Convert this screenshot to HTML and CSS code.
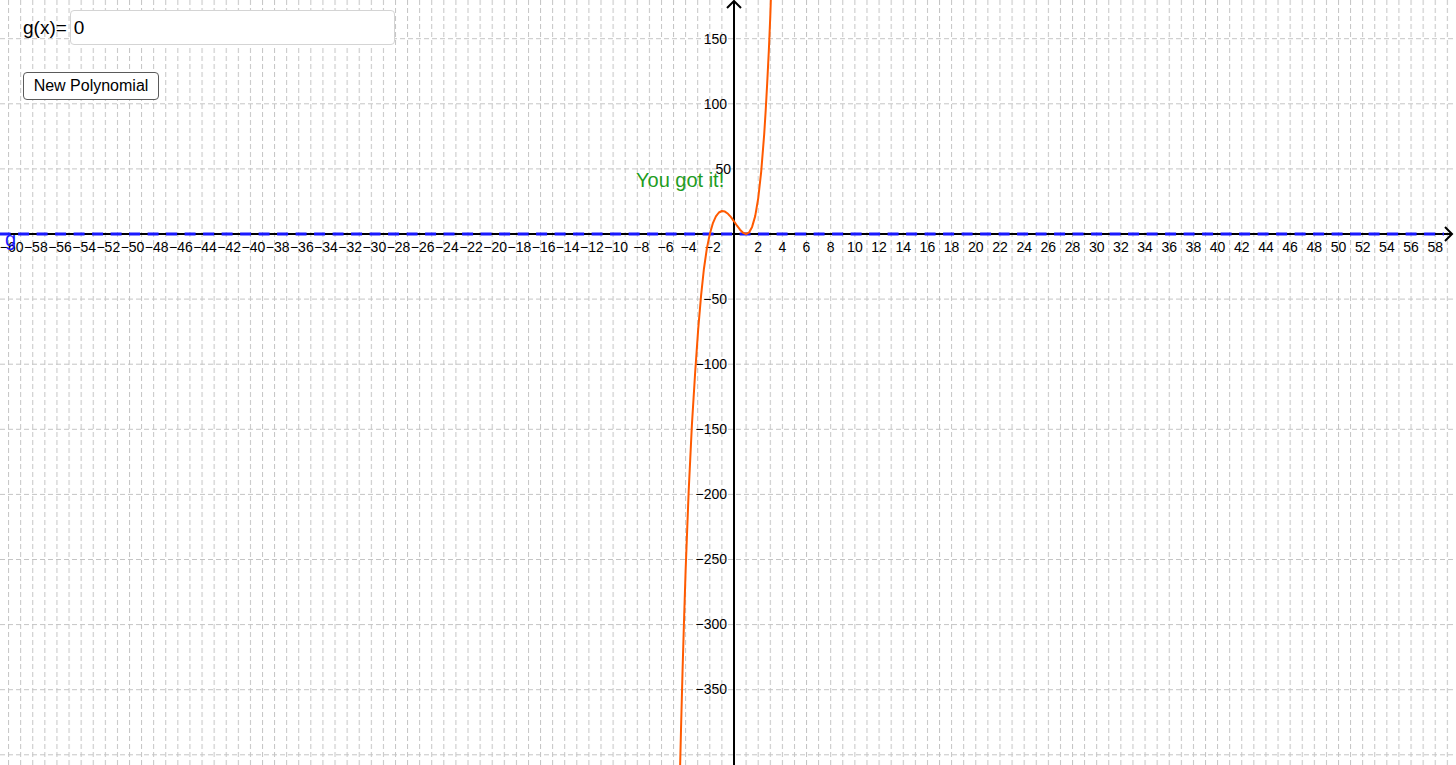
FILE: index.html
```html
<!DOCTYPE html>
<html lang="en">
<head>
<meta charset="utf-8">
<title>New Polynomial</title>
<link rel="stylesheet" href="styles.css">
</head>
<body>
<div class="stage">
  <svg class="graph" width="1456" height="765" viewBox="0 0 1456 765" xmlns="http://www.w3.org/2000/svg">
    <defs>
      <pattern id="gv" x="8.1" y="0" width="12.09" height="8" patternUnits="userSpaceOnUse">
        <rect x="0" y="0" width="1" height="5" class="grid"/>
      </pattern>
      <pattern id="gh" x="0" y="38.2" width="8" height="65.1" patternUnits="userSpaceOnUse">
        <rect x="0" y="0" width="5" height="1" class="grid"/>
      </pattern>
    </defs>
    <rect width="1456" height="765" fill="url(#gv)"/>
    <rect width="1456" height="765" fill="url(#gh)"/>

    <!-- axes -->
    <line class="axis" x1="0" y1="234" x2="1452" y2="234"/>
    <line class="axis" x1="734" y1="1" x2="734" y2="765"/>
    <polyline class="axis" points="1445,227 1452,234 1445,241"/>
    <polyline class="axis" points="727,8 734,1 741,8"/>

    <!-- g(x)=0 -->
    <line class="gline" x1="-0.4" y1="234" x2="1444" y2="234"/>

    <!-- x labels -->
    <g class="xl">
      <text x="11.6" y="252">−60</text>
      <text x="35.8" y="252">−58</text>
      <text x="60.0" y="252">−56</text>
      <text x="84.1" y="252">−54</text>
      <text x="108.3" y="252">−52</text>
      <text x="132.5" y="252">−50</text>
      <text x="156.7" y="252">−48</text>
      <text x="180.9" y="252">−46</text>
      <text x="205.0" y="252">−44</text>
      <text x="229.2" y="252">−42</text>
      <text x="253.4" y="252">−40</text>
      <text x="277.6" y="252">−38</text>
      <text x="301.8" y="252">−36</text>
      <text x="325.9" y="252">−34</text>
      <text x="350.1" y="252">−32</text>
      <text x="374.3" y="252">−30</text>
      <text x="398.5" y="252">−28</text>
      <text x="422.7" y="252">−26</text>
      <text x="446.8" y="252">−24</text>
      <text x="471.0" y="252">−22</text>
      <text x="495.2" y="252">−20</text>
      <text x="519.4" y="252">−18</text>
      <text x="543.6" y="252">−16</text>
      <text x="567.7" y="252">−14</text>
      <text x="591.9" y="252">−12</text>
      <text x="616.1" y="252">−10</text>
      <text x="641.3" y="252">−8</text>
      <text x="665.5" y="252">−6</text>
      <text x="688.6" y="252">−4</text>
      <text x="712.8" y="252">−2</text>
      <text x="758.2" y="252">2</text>
      <text x="782.4" y="252">4</text>
      <text x="806.5" y="252">6</text>
      <text x="830.7" y="252">8</text>
      <text x="854.9" y="252">10</text>
      <text x="879.1" y="252">12</text>
      <text x="903.3" y="252">14</text>
      <text x="927.4" y="252">16</text>
      <text x="951.6" y="252">18</text>
      <text x="975.8" y="252">20</text>
      <text x="1000.0" y="252">22</text>
      <text x="1024.2" y="252">24</text>
      <text x="1048.3" y="252">26</text>
      <text x="1072.5" y="252">28</text>
      <text x="1096.7" y="252">30</text>
      <text x="1120.9" y="252">32</text>
      <text x="1145.1" y="252">34</text>
      <text x="1169.2" y="252">36</text>
      <text x="1193.4" y="252">38</text>
      <text x="1217.6" y="252">40</text>
      <text x="1241.8" y="252">42</text>
      <text x="1266.0" y="252">44</text>
      <text x="1290.1" y="252">46</text>
      <text x="1314.3" y="252">48</text>
      <text x="1338.5" y="252">50</text>
      <text x="1362.7" y="252">52</text>
      <text x="1386.9" y="252">54</text>
      <text x="1411.0" y="252">56</text>
      <text x="1435.2" y="252">58</text>
    </g>

    <!-- y labels -->
    <g class="yl">
      <text x="727" y="44">150</text>
      <text x="727" y="109">100</text>
      <text x="731" y="174">50</text>
      <text x="727" y="304">−50</text>
      <text x="727" y="369">−100</text>
      <text x="727" y="434">−150</text>
      <text x="727" y="499">−200</text>
      <text x="727" y="564">−250</text>
      <text x="727" y="629">−300</text>
      <text x="727" y="694">−350</text>
    </g>

    <!-- f(x) -->
    <polyline class="curve" points="679.6,787 681.1,726 682.6,669 684.1,618.2 685.6,571 687.2,529.3 688.7,490.6 691.9,425 695.2,371.8 698.2,329.1 701.1,295.4 703.9,269 706.8,248.9 709.8,234 712.8,223.4 715.9,216.4 718.9,212.5 721.9,211 724.9,211.6 728,213.8 731,217.2 734,221.3 737,225.7 740,229.7 743.1,232.8 746.1,234 749.1,232.4 752.1,226.9 755.2,216.1 758.2,198.3 761.2,171.7 764.2,134.1 765.7,110.3 767.2,83.1 768.8,51.3 770.3,15.7 773.3,-71"/>

    <text class="glabel" x="5" y="246">g</text>
    <text class="success" x="636" y="187">You got it!</text>
  </svg>

  <div class="input-row">
    <label class="input-label" for="gx">g(x)=</label>
    <div class="input-box" id="gx">0</div>
  </div>
  <button class="btn" type="button">New Polynomial</button>
</div>
</body>
</html>
```

FILE: styles.css
```css
html, body {
  margin: 0;
  padding: 0;
  background: #ffffff;
}

.stage {
  position: relative;
  width: 1456px;
  height: 765px;
  overflow: hidden;
  background: #ffffff;
  font-family: "Liberation Sans", Arial, sans-serif;
}

.graph {
  position: absolute;
  left: 0;
  top: 0;
  display: block;
}

.grid {
  fill: #c4c4c4;
}

.axis {
  stroke: #000000;
  stroke-width: 2;
  fill: none;
}

.gline {
  stroke: #1a1aff;
  stroke-width: 3;
  stroke-dasharray: 11 7.5;
}

.xl text {
  font-family: "Liberation Sans", Arial, sans-serif;
  font-size: 14px;
  fill: #000000;
  text-anchor: middle;
}

.yl text {
  font-family: "Liberation Sans", Arial, sans-serif;
  font-size: 14px;
  fill: #000000;
  text-anchor: end;
}

.curve {
  fill: none;
  stroke: #ff5a00;
  stroke-width: 2;
  stroke-linejoin: round;
  stroke-linecap: round;
}

.glabel {
  font-family: "Liberation Sans", Arial, sans-serif;
  font-size: 20px;
  fill: #1a1aff;
}

.success {
  font-family: "Liberation Sans", Arial, sans-serif;
  font-size: 20px;
  fill: #1f9d1f;
}

.input-row {
  position: absolute;
  left: 23px;
  top: 10px;
  display: flex;
  align-items: center;
  gap: 3px;
}

.input-label {
  font-size: 19px;
  color: #000000;
  line-height: 1;
}

.input-box {
  box-sizing: border-box;
  width: 325px;
  height: 35px;
  border: 1px solid #d4d4d4;
  border-radius: 4px;
  background: #ffffff;
  padding: 0 3px;
  font-size: 19px;
  line-height: 33px;
  color: #000000;
}

.btn {
  position: absolute;
  left: 23px;
  top: 72px;
  box-sizing: border-box;
  width: 136px;
  height: 28px;
  padding: 0;
  border: 1px solid #5a5a5a;
  border-radius: 4px;
  background: #ffffff;
  font-family: "Liberation Sans", Arial, sans-serif;
  font-size: 16px;
  color: #000000;
  cursor: pointer;
}
```
